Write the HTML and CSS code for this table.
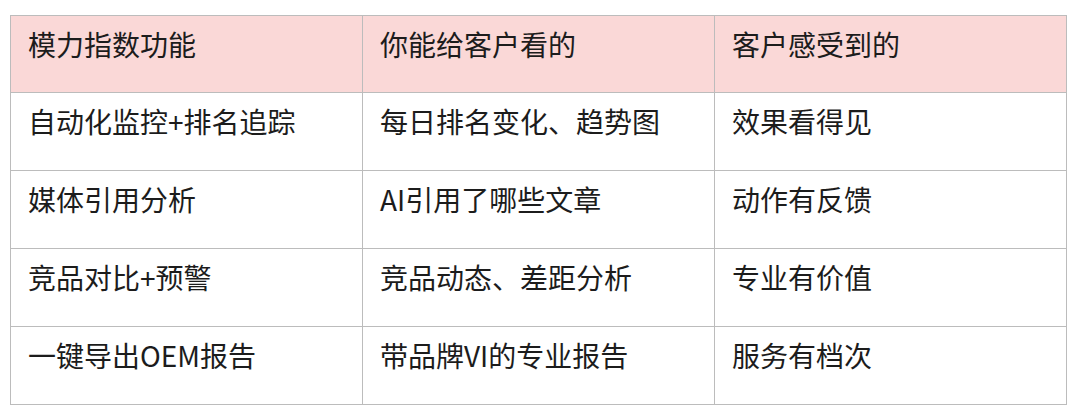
FILE: index.html
```html
<!DOCTYPE html>
<html lang="zh-CN">
<head>
<meta charset="utf-8">
<title>模力指数功能</title>
<link rel="stylesheet" href="styles.css">
</head>
<body>
<table class="feature-table">
  <thead>
    <tr>
      <th>模力指数功能</th>
      <th>你能给客户看的</th>
      <th>客户感受到的</th>
    </tr>
  </thead>
  <tbody>
    <tr>
      <td>自动化监控+排名追踪</td>
      <td>每日排名变化、趋势图</td>
      <td>效果看得见</td>
    </tr>
    <tr>
      <td>媒体引用分析</td>
      <td>AI引用了哪些文章</td>
      <td>动作有反馈</td>
    </tr>
    <tr>
      <td>竞品对比+预警</td>
      <td>竞品动态、差距分析</td>
      <td>专业有价值</td>
    </tr>
    <tr>
      <td>一键导出OEM报告</td>
      <td>带品牌VI的专业报告</td>
      <td>服务有档次</td>
    </tr>
  </tbody>
</table>
</body>
</html>
```
FILE: styles.css
```css
html, body {
  margin: 0;
  padding: 0;
  background: #ffffff;
}

body {
  padding: 15px 0 0 10px;
  font-family: "Noto Sans CJK SC", "Noto Sans", sans-serif;
  color: #1c1c1c;
}

.feature-table {
  border-collapse: collapse;
  table-layout: fixed;
  width: 1057px;
}

.feature-table th,
.feature-table td {
  border: 1px solid #bcbcbc;
  font-size: 28px;
  font-weight: 400;
  line-height: 40px;
  text-align: left;
  vertical-align: top;
  padding: 8px 17px 29px;
  white-space: nowrap;
}

.feature-table th {
  background: #fad8d7;
  padding-bottom: 28px;
}
```
